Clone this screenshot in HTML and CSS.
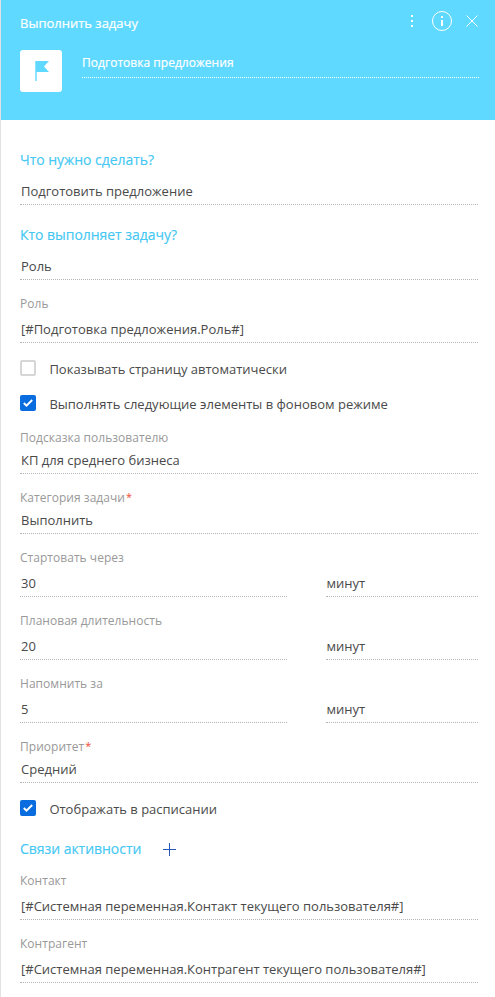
FILE: index.html
```html
<!DOCTYPE html>
<html lang="ru">
<head>
<meta charset="utf-8">
<title>Выполнить задачу</title>
<link rel="stylesheet" href="styles.css">
</head>
<body>
<div class="panel">
  <header class="header">
    <div class="topbar">
      <h1 class="title">Выполнить задачу</h1>
      <div class="actions">
        <svg width="2" height="12" viewBox="0 0 2 12" fill="#fff" shape-rendering="crispEdges"><path d="M0 0h2v2H0zM0 5h2v2H0zM0 10h2v2H0z"/></svg>
        <svg class="info" width="20" height="20" viewBox="0 0 20 20"><circle cx="10" cy="10" r="9.5" fill="none" stroke="#fff"/><path d="M9 5h2v2H9zM9 9h2v6H9z" fill="#fff"/></svg>
        <svg class="close" width="12" height="12" viewBox="0 0 12 12" stroke="#fff"><path d="M.5.5l11 11M11.5.5l-11 11"/></svg>
      </div>
    </div>
    <div class="element">
      <div class="tile"><svg width="14" height="20" viewBox="0 0 14 20" fill="#5fd9ff"><path d="M.3 0H14L9 5.5l5 5.5H1.7v9H.3z"/></svg></div>
      <div class="name">Подготовка предложения</div>
    </div>
  </header>
  <main class="form">
    <h2 class="heading">Что нужно сделать?</h2>
    <div class="value">Подготовить предложение</div>
    <h2 class="heading second">Кто выполняет задачу?</h2>
    <div class="value">Роль</div>
    <div class="field"><div class="label">Роль</div><div class="value">[#Подготовка предложения.Роль#]</div></div>
    <div class="check"><span class="box"></span><span class="text">Показывать страницу автоматически</span></div>
    <div class="check next"><span class="box on"><svg width="10" height="8" viewBox="0 0 10 8" fill="none" stroke="#fff" stroke-width="2"><path d="M.8 4l2.7 2.6L9.2 1"/></svg></span><span class="text">Выполнять следующие элементы в фоновом режиме</span></div>
    <div class="field compact after-check"><div class="label">Подсказка пользователю</div><div class="value">КП для среднего бизнеса</div></div>
    <div class="field compact"><div class="label">Категория задачи<span class="star">*</span></div><div class="value">Выполнить</div></div>
    <div class="field"><div class="label">Стартовать через</div><div class="pair"><div class="value">30</div><div class="value unit">минут</div></div></div>
    <div class="field"><div class="label">Плановая длительность</div><div class="pair"><div class="value">20</div><div class="value unit">минут</div></div></div>
    <div class="field"><div class="label">Напомнить за</div><div class="pair"><div class="value">5</div><div class="value unit">минут</div></div></div>
    <div class="field compact"><div class="label">Приоритет<span class="star">*</span></div><div class="value">Средний</div></div>
    <div class="check"><span class="box on"><svg width="10" height="8" viewBox="0 0 10 8" fill="none" stroke="#fff" stroke-width="2"><path d="M.8 4l2.7 2.6L9.2 1"/></svg></span><span class="text">Отображать в расписании</span></div>
    <div class="links"><h2 class="heading">Связи активности</h2><svg class="plus" width="13" height="13" viewBox="0 0 13 13" fill="#2456b8" shape-rendering="crispEdges"><path d="M6 0h1v13H6zM0 6h13v1H0z"/></svg></div>
    <div class="field first-link"><div class="label">Контакт</div><div class="value">[#Системная переменная.Контакт текущего пользователя#]</div></div>
    <div class="field"><div class="label">Контрагент</div><div class="value">[#Системная переменная.Контрагент текущего пользователя#]</div></div>
  </main>
</div>
</body>
</html>
```
FILE: styles.css
```css
* { box-sizing: border-box; }
body { margin: 0; background: #fff; color: #4a4a4a; font: 13px/20px "Open Sans", sans-serif; }
h1, h2 { margin: 0; font-weight: 400; }
svg { display: block; flex: none; }
.panel { height: 997px; border-left: 1px solid #e2e2e2; overflow: hidden; }
.header { height: 120px; padding: 11px 16px 0 19px; background: #5fd9ff; color: #fff; }
.topbar { display: flex; justify-content: space-between; height: 20px; }
.title { font-size: 13px; line-height: 20px; padding-top: 2px; -webkit-text-stroke: .2px #fff; }
.actions { display: flex; align-items: center; }
.info { margin-left: 19px; }
.close { margin: 0 1px 0 14px; }
.element { display: flex; margin-top: 19px; }
.tile { width: 42px; height: 42px; padding: 11px 0 0 15px; background: #fff; border-radius: 3px; }
.name { flex: 1; height: 24px; margin: 4px 0 0 20px; border-bottom: 1px dotted #fff; font-size: 12px; letter-spacing: .03px; line-height: 17px; -webkit-text-stroke: .2px #fff; }
.form { padding: 30px 17px 0 19px; }
.heading { font-size: 14px; letter-spacing: -.04px; line-height: 19px; color: #44c8f3; margin-bottom: 12px; -webkit-text-stroke: .15px #44c8f3; }
.second { margin-top: 20px; }
.value { height: 24px; padding-left: 1px; border-bottom: 1px dotted #b4b4b4; white-space: nowrap; }
.field { margin-top: 15px; }
.label { height: 17px; margin-bottom: 7px; font-size: 12px; letter-spacing: .03px; line-height: 17px; color: #999; }
.compact .label { margin-bottom: 4px; }
.star { position: relative; top: -1px; margin-left: 1px; font-size: 11px; color: #ef4b32; }
.pair { display: grid; grid-template-columns: 267px 152px; justify-content: space-between; }
.unit { padding-left: .5px; }
.check { display: flex; height: 16px; margin-top: 17px; }
.next { margin-top: 19px; }
.after-check { margin-top: 18px; }
.box { display: flex; align-items: center; justify-content: center; width: 16px; height: 16px; border: 2px solid #d6d6d6; border-radius: 2px; }
.on { border: 0; background: #0a6ddf; }
.text { margin: -1px 0 0 13.4px; white-space: nowrap; }
.links { display: flex; align-items: center; gap: 22px; height: 19px; margin-top: 23px; }
.links .heading { margin: 0; }
.plus { margin-top: 2px; }
.first-link { margin-top: 14px; }
```
